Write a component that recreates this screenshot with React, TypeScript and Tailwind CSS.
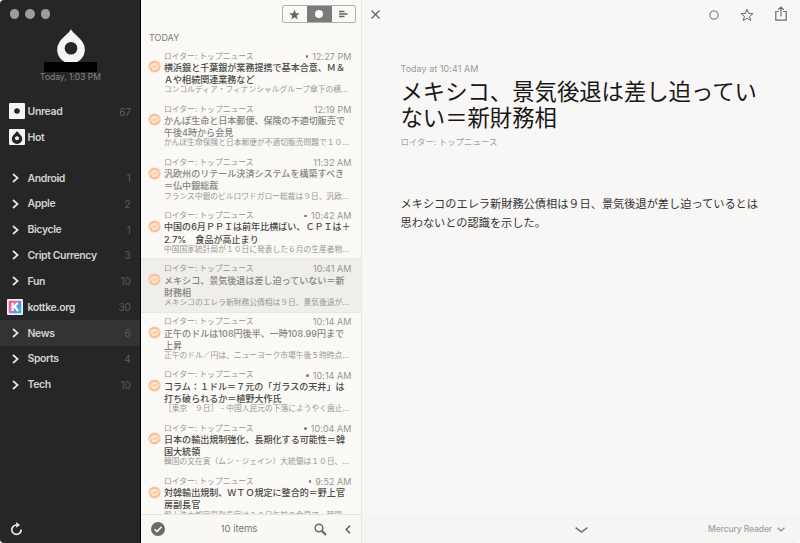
import React from "react";

const FEED = "ロイター: トップニュース";

type Article = {
  time: string;
  unread?: boolean;
  selected?: boolean;
  title: [string, string];
  summary: string;
};

const articles: Article[] = [
  { time: "12:27 PM", unread: true, title: ["横浜銀と千葉銀が業務提携で基本合意、Ｍ＆", "Ａや相続関連業務など"], summary: "コンコルディア・フィナンシャルグループ傘下の横…" },
  { time: "12:19 PM", title: ["かんぽ生命と日本郵便、保険の不適切販売で", "午後4時から会見"], summary: "かんぽ生命保険と日本郵便が不適切販売問題で１０…" },
  { time: "11:32 AM", title: ["汎欧州のリテール決済システムを構築すべき", "＝仏中銀総裁"], summary: "フランス中銀のビルロワドガロー総裁は９日、汎欧…" },
  { time: "10:42 AM", unread: true, title: ["中国の6月ＰＰＩは前年比横ばい、ＣＰＩは＋", "2.7%　食品が高止まり"], summary: "中国国家統計局が１０日に発表した６月の生産者物…" },
  { time: "10:41 AM", selected: true, title: ["メキシコ、景気後退は差し迫っていない＝新", "財務相"], summary: "メキシコのエレラ新財務公債相は９日、景気後退が…" },
  { time: "10:14 AM", title: ["正午のドルは108円後半、一時108.99円まで", "上昇"], summary: "正午のドル／円は、ニューヨーク市場午後５時時点…" },
  { time: "10:14 AM", unread: true, title: ["コラム：１ドル＝７元の「ガラスの天井」は", "打ち破られるか＝植野大作氏"], summary: "［東京　９日］ - 中国人民元の下落にようやく歯止…" },
  { time: "10:04 AM", unread: true, title: ["日本の輸出規制強化、長期化する可能性＝韓", "国大統領"], summary: "韓国の文在寅（ムン・ジェイン）大統領は１０日、…" },
  { time: "9:52 AM", unread: true, title: ["対韓輸出規制、ＷＴＯ規定に整合的＝野上官", "房副長官"], summary: "野上浩太郎官房副長官は１０日午前の会見で、韓国…" },
];

const folders = [
  { name: "Android", count: 1 },
  { name: "Apple", count: 2 },
  { name: "Bicycle", count: 1 },
  { name: "Cript Currency", count: 3 },
  { name: "Fun", count: 10 },
  { name: "kottke.org", count: 30, site: true },
  { name: "News", count: 6, active: true },
  { name: "Sports", count: 4 },
  { name: "Tech", count: 10 },
];

const DROP = "M12 0 C13 2 22 11 23 13 A12.6 12.6 0 1 1 1 13 C2 11 11 2 12 0 Z";

function Chevron() {
  return (
    <svg className="ml-[2px] h-[12px] w-[12px]" viewBox="0 0 12 12" fill="none" stroke="#e6e6e6" strokeWidth="1.7">
      <path d="M3 2 L7.6 6 L3 10" />
    </svg>
  );
}

function KottkeIcon() {
  return (
    <svg className="-ml-px h-[16px] w-[16px]" viewBox="0 0 16 16">
      <defs>
        <linearGradient id="kottke" x1="0" y1="0.2" x2="1" y2="0.8">
          <stop offset="0" stopColor="#f05a8a" />
          <stop offset="0.4" stopColor="#e86bb8" />
          <stop offset="0.6" stopColor="#6f8fe0" />
          <stop offset="1" stopColor="#18c5dc" />
        </linearGradient>
      </defs>
      <rect width="16" height="16" rx="1" fill="#f4f4f4" />
      <rect x="1.7" y="1.7" width="12.6" height="12.6" fill="url(#kottke)" />
      <path d="M5.6 4 V12 M10.8 4 L6.5 8.4 M7.6 7.4 L11 12" stroke="#fff" strokeWidth="2.2" fill="none" />
    </svg>
  );
}

function Sidebar() {
  return (
    <aside className="flex w-[141px] shrink-0 flex-col border-r border-black bg-[#262626] text-[#d2d2d2]">
      <div className="flex h-[28px] shrink-0 gap-[6px] pl-[9.5px] pt-[9px]">
        <i className="h-[9.5px] w-[9.5px] rounded-full bg-[#9d9ba1]" />
        <i className="h-[9.5px] w-[9.5px] rounded-full bg-[#9d9ba1]" />
        <i className="h-[9.5px] w-[9.5px] rounded-full bg-[#9d9ba1]" />
      </div>
      <div className="flex h-[71px] shrink-0 flex-col items-center pl-px">
        <svg className="mt-px h-[33px] w-[28px]" viewBox="57 29 28 33">
          <path d="M71 29.3 C73 33 79.5 37.5 82.5 42 A13.8 13.8 0 1 1 59.5 42 C62.5 37.5 69 33 71 29.3Z" fill="#f5f5f5" />
          <circle cx="71" cy="48.3" r="6.3" fill="#262626" />
        </svg>
        <div className="h-[10px] w-[53px] bg-black" />
        <div className="whitespace-nowrap text-[8.5px] leading-[10px] tracking-[-0.02px] text-[#858585]">Today, 1:03 PM</div>
      </div>
      <div className="flex h-[26px] shrink-0 items-center pl-[9px] pr-[9px]">
        <svg className="-mt-[2px] h-[16px] w-[16px]" viewBox="0 0 16 16">
          <rect width="16" height="16" rx="1" fill="#f4f4f4" />
          <circle cx="8" cy="8" r="2.8" fill="#262626" />
        </svg>
        <span className="ml-[2.5px] text-[10.5px] font-semibold tracking-[-0.35px]">Unread</span>
        <span className="ml-auto text-[10px] text-[#626262]">67</span>
      </div>
      <div className="flex h-[26px] shrink-0 items-center pl-[9px]">
        <svg className="-mt-[2px] h-[16px] w-[16px]" viewBox="0 0 16 16">
          <rect width="16" height="16" rx="1" fill="#f4f4f4" />
          <g transform="translate(3.1 2) scale(0.41)">
            <path d={DROP} fill="#262626" />
            <circle cx="12" cy="17.5" r="4.8" fill="#f4f4f4" />
          </g>
        </svg>
        <span className="ml-[2.5px] text-[10.5px] font-semibold tracking-[-0.35px]">Hot</span>
      </div>
      <nav className="mt-[14px] flex flex-col">
        {folders.map((f) => (
          <div key={f.name} className={`flex h-[25.85px] items-center pl-[8px] pr-[9.5px] ${f.active ? "bg-[#333333]" : ""}`}>
            <span className="w-[19.5px]">{f.site ? <KottkeIcon /> : <Chevron />}</span>
            <span className="whitespace-nowrap pt-px text-[10.5px] font-semibold tracking-[-0.4px]">{f.name}</span>
            <span className="ml-auto pt-px text-[10px] tracking-[-0.2px] text-[#5c5c5c]">{f.count}</span>
          </div>
        ))}
      </nav>
      <svg className="mb-[7px] ml-[10px] mt-auto h-[14px] w-[13px]" viewBox="0 0 13 14" fill="none">
        <path d="M6.7 3 A4.7 4.7 0 1 0 11.2 7.5" stroke="#e8e8e8" strokeWidth="1.7" />
        <path d="M6.2 0 L10 3.1 L6.2 5.7Z" fill="#e8e8e8" />
      </svg>
    </aside>
  );
}

function FeedIcon() {
  return (
    <svg className="mt-[14px] h-[13px] w-[13px] shrink-0" viewBox="0 0 13 13">
      <circle cx="6.5" cy="6.5" r="6.1" fill="#fbc299" />
      <path d="M2.4 8.6 C1.9 5 4.8 3 9 4.1 C6 4.2 4.5 5.7 4.7 7.6 M10.6 4.4 C11.1 8 8.2 10 4 8.9 C7 8.8 8.5 7.3 8.3 5.4" fill="none" stroke="#fff3e6" strokeWidth="1.1" />
    </svg>
  );
}

function ArticleRow({ a }: { a: Article }) {
  return (
    <div className={`flex h-[53.17px] shrink-0 pl-[7px] ${a.selected ? "bg-[#efeeea] shadow-[0_-1px_0_#e7e6e2,0_1px_0_#e7e6e2]" : ""}`}>
      <FeedIcon />
      <div className="ml-[3px] flex w-[187.5px] flex-col whitespace-nowrap pt-[4.6px]">
        <div className="flex h-[11px] items-center justify-between text-[#969593]">
          <span className="text-[7.8px]">{FEED}</span>
          <span className="flex items-center text-[9px] tracking-[0.05px]">
            {a.unread && <i className="mr-[4px] h-[2.5px] w-[2.5px] rounded-full bg-[#777]" />}
            {a.time}
          </span>
        </div>
        <div className={`text-[9.05px] font-medium leading-[12.2px] ${a.unread ? "text-[#4a4a48]" : "text-[#858482]"}`}>
          <div>{a.title[0]}</div>
          <div>{a.title[1]}</div>
        </div>
        <div className="text-[7.75px] leading-[7.6px] text-[#989795]">{a.summary}</div>
      </div>
    </div>
  );
}

function ArticleList() {
  return (
    <section className="flex w-[221px] shrink-0 flex-col border-r border-[#e8e7e4] bg-[#faf9f5]">
      <div className="flex h-[28px] shrink-0 items-start justify-end pr-[5px] pt-[5px]">
        <div className="flex h-[18px] w-[74px] overflow-hidden rounded-[2px] border border-[#b1b0ae]">
          <div className="flex flex-1 items-center justify-center">
            <svg className="h-[11px] w-[11px]" viewBox="0 0 24 24" fill="#666"><path d="M12 1 L15 9 L23.5 9.3 L16.8 14.5 L19.2 23 L12 18 L4.8 23 L7.2 14.5 L.5 9.3 L9 9Z" /></svg>
          </div>
          <div className="flex w-[25px] items-center justify-center bg-[#7b7b7b]">
            <i className="h-[8px] w-[8px] rounded-full bg-[#fafafa]" />
          </div>
          <div className="flex flex-1 items-center justify-center">
            <svg className="h-[8px] w-[9px]" viewBox="0 0 9 8" stroke="#666" strokeWidth="1.3"><path d="M0 1.5H5.5M0 4H8.5M0 6.5H5.5" /></svg>
          </div>
        </div>
      </div>
      <h2 className="h-[18.3px] shrink-0 pl-[8px] pt-[4px] text-[9px] leading-[12px] text-[#7c7b79]">TODAY</h2>
      <div className="flex min-h-0 flex-1 flex-col overflow-hidden">
        {articles.map((a) => <ArticleRow key={a.title[0]} a={a} />)}
      </div>
      <footer className="flex h-[29px] shrink-0 items-center border-t border-[#e6e5e2] bg-[#f9f8f5] pl-[10px] pr-[10px] text-[#666]">
        <svg className="h-[14px] w-[14px]" viewBox="0 0 14 14"><circle cx="7" cy="7" r="7" fill="#6b6b6b" /><path d="M3.6 7.2 L6 9.6 L10.6 4.7" fill="none" stroke="#faf9f5" strokeWidth="1.5" /></svg>
        <span className="flex-1 pr-px text-center text-[9.6px] tracking-[-0.05px] text-[#777]">10 items</span>
        <svg className="h-[13px] w-[13px]" viewBox="0 0 13 13" fill="none" stroke="#666"><circle cx="5" cy="5" r="3.8" strokeWidth="1.5" /><path d="M7.8 7.8 L12 12" strokeWidth="2.2" /></svg>
        <svg className="ml-[18px] h-[9px] w-[6px]" viewBox="0 0 6 9" fill="none" stroke="#555" strokeWidth="1.4"><path d="M5 .8 L1.2 4.5 L5 8.2" /></svg>
      </footer>
    </section>
  );
}

function Reader() {
  return (
    <main className="flex min-w-0 flex-1 flex-col bg-[#f8f7f5]">
      <header className="flex h-[29px] shrink-0 items-center pl-[9px] pr-[13.5px]">
        <svg className="h-[9px] w-[9px]" viewBox="0 0 9 9" stroke="#626262" strokeWidth="1.2"><path d="M.5 .5 L8.5 8.5 M8.5 .5 L.5 8.5" /></svg>
        <svg className="ml-auto h-[10px] w-[10px]" viewBox="0 0 10 10"><circle cx="5" cy="5" r="4.1" fill="none" stroke="#6d6d6d" /></svg>
        <svg className="ml-[21px] h-[14px] w-[14px]" viewBox="0 0 14 14" fill="none" stroke="#6d6d6d"><path d="M7 1.3 L8.6 5.4 L13 5.6 L9.6 8.3 L10.7 12.6 L7 10.2 L3.3 12.6 L4.4 8.3 L1 5.6 L5.4 5.4Z" /></svg>
        <svg className="-mt-[2px] ml-[21px] h-[15px] w-[12px]" viewBox="0 0 12 15" fill="none" stroke="#6d6d6d" strokeWidth="1.2"><path d="M3.8 5.5 H.8 V14.2 H11.2 V5.5 H8.2 M6 10.5 V1 M3.2 3.7 L6 1 L8.8 3.7" /></svg>
      </header>
      <article className="flex-1 whitespace-nowrap pl-[38.5px] pt-[34px]">
        <div className="text-[8.9px] leading-[12px] tracking-[0.1px] text-[#999896]">Today at 10:41 AM</div>
        <h1 className="mt-[4px] text-[22.35px] leading-[26.4px] text-[#171717]">
          <div>メキシコ、景気後退は差し迫ってい</div>
          <div>ない＝新財務相</div>
        </h1>
        <div className="mt-[4.2px] text-[8.45px] leading-[12px] text-[#a2a19f]">{FEED}</div>
        <p className="mt-[47.3px] text-[11.2px] leading-[18.5px] text-[#333]">
          メキシコのエレラ新財務公債相は９日、景気後退が差し迫っているとは<br />思わないとの認識を示した。
        </p>
      </article>
      <footer className="flex h-[28px] shrink-0 items-center justify-end border-t border-[#f4f3f1] bg-[#f6f5f3] pr-[15px]">
        <svg className="mr-[120px] h-[6px] w-[13px]" viewBox="0 0 13 6" fill="none" stroke="#6d6d6d" strokeWidth="1.5"><path d="M.6 .7 L6.5 5 L12.4 .7" /></svg>
        <span className="whitespace-nowrap text-[8.6px] font-medium tracking-[-0.15px] text-[#a3a2a0]">Mercury Reader</span>
        <svg className="ml-[5px] h-[5px] w-[8px]" viewBox="0 0 8 5" fill="none" stroke="#888" strokeWidth="1.2"><path d="M.5 .7 L4 4 L7.5 .7" /></svg>
      </footer>
    </main>
  );
}

export default function App() {
  return (
    <div className="h-[543px] w-[800px] overflow-hidden bg-white">
      <div className="flex h-full w-full overflow-hidden rounded-[4px] font-['Inter','Noto_Sans_CJK_JP',sans-serif]" lang="ja">
        <Sidebar />
        <ArticleList />
        <Reader />
      </div>
    </div>
  );
}
